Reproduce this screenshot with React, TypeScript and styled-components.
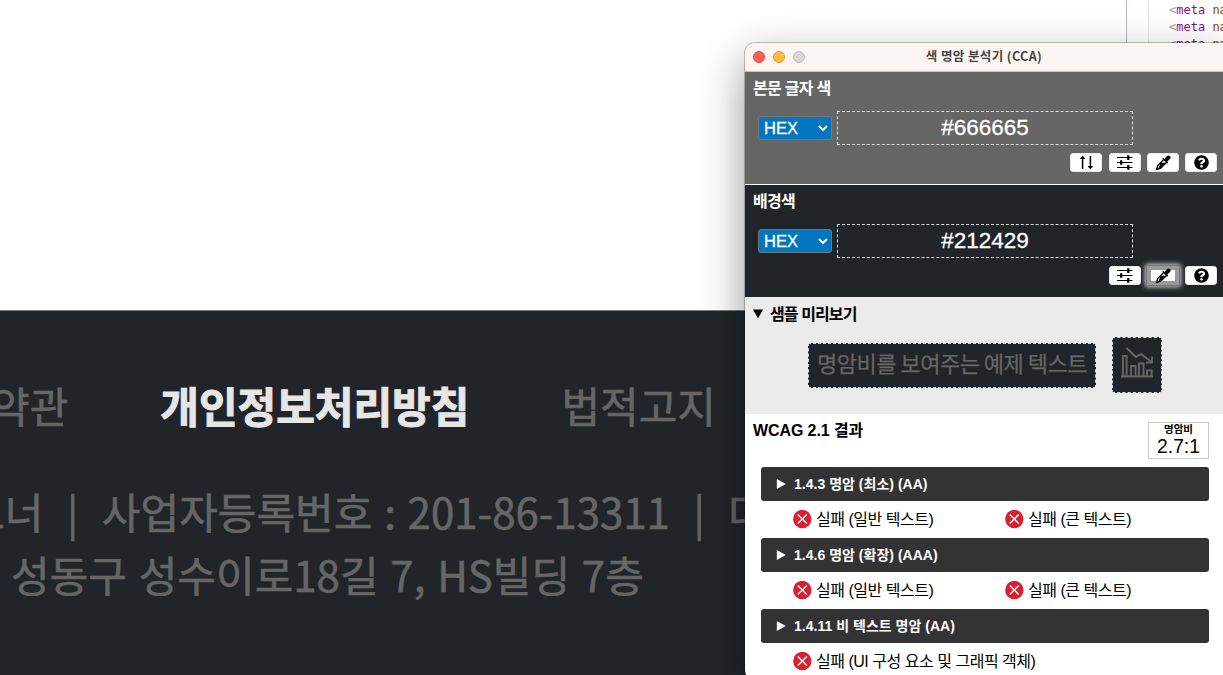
import React from "react";
import styled, { createGlobalStyle } from "styled-components";
import { FaQuestionCircle } from "react-icons/fa";

const GlobalStyle = createGlobalStyle`
  * { box-sizing: border-box; }
  body { margin: 0; overflow: hidden; background: #fff; }
  h2, p { margin: 0; }
`;

const Desktop = styled.main`
  position: relative;
  display: flex;
  flex-direction: column;
  width: 1223px;
  height: 675px;
  overflow: hidden;
  background: #fff;
`;

const TopArea = styled.div`
  display: flex;
  justify-content: flex-end;
  height: 310px;
`;

const DevTools = styled.div`
  display: flex;
  width: 97px;
  border-left: 1px solid #b4b4be;
`;

const Gutter = styled.div`
  flex: none;
  width: 22px;
  border-right: 1px solid #e6e6e6;
`;

const Code = styled.div`
  padding: 2px 0 0 20px;
  font: 12px/17px "DejaVu Sans Mono", monospace;
  color: #a894a6;
  white-space: pre;
`;
const Tag = styled.span`color: #881280;`;
const Attr = styled.span`color: #994500;`;

const Footer = styled.footer`
  height: 365px;
  border-top: 1px solid #7b7f81;
  background: #212529;
  color: #666;
  font: 400 42px/62px "Noto Sans CJK KR", sans-serif;
  -webkit-text-stroke: 0.6px #666;
  word-spacing: 2.4px;
  white-space: pre;
  overflow: hidden;
`;

const FooterNav = styled.nav`
  display: flex;
  gap: 92px;
  margin: 63px 0 0 -9px;
`;

const FooterLink = styled.span<{ $strong?: boolean }>`
  font-weight: ${(p) => (p.$strong ? 700 : 400)};
  color: ${(p) => (p.$strong ? "#e6e6e6" : "#666")};
  -webkit-text-stroke: ${(p) => (p.$strong ? "1px #e6e6e6" : "0.6px #666")};
`;

const FooterLine = styled.p<{ $top: number; $left: number }>`
  margin: ${(p) => p.$top}px 0 0 ${(p) => p.$left}px;
`;

const Window = styled.section`
  position: absolute;
  left: 745px;
  top: 43px;
  width: 480px;
  height: 637px;
  display: flex;
  flex-direction: column;
  border-radius: 10px 0 0 10px;
  background: #fff;
  box-shadow: 0 0 0 1px rgba(0, 0, 0, 0.22), 0 16px 44px rgba(0, 0, 0, 0.42);
  font-family: "Liberation Sans", "Noto Sans CJK KR", sans-serif;
  white-space: nowrap;
`;

const TitleBar = styled.header`
  display: grid;
  grid-template-columns: 1fr auto 1fr;
  align-items: center;
  height: 29px;
  padding: 0 10px 1px 8px;
  border-bottom: 1px solid #c6c2c1;
  border-radius: 10px 0 0 0;
  background: #faf4f2;
`;

const Lights = styled.div`
  display: flex;
  gap: 8px;
`;

const Light = styled.i<{ $fill: string; $edge: string }>`
  width: 12px;
  height: 12px;
  border: 1px solid ${(p) => p.$edge};
  border-radius: 50%;
  background: ${(p) => p.$fill};
`;

const Title = styled.h2`
  margin-top: -2px;
  font: 700 12.5px/20px "Noto Sans CJK KR", sans-serif;
  letter-spacing: 0.4px;
  color: #444;
`;

const ColorSection = styled.section<{ $bg: string; $line?: boolean }>`
  height: ${(p) => (p.$line ? 113 : 112)}px;
  padding: 0 8px;
  border-bottom: ${(p) => (p.$line ? "1px solid #fff" : "0")};
  background: ${(p) => p.$bg};
  color: #fff;
`;

const Heading = styled.h2<{ $ls?: number }>`
  height: 32px;
  font-size: 16px;
  font-weight: 700;
  line-height: 34px;
  letter-spacing: ${(p) => p.$ls ?? -0.7}px;
`;

const ValueRow = styled.div`
  display: flex;
  align-items: center;
  gap: 5px;
  height: 34px;
  margin-top: 7px;
  padding-left: 5px;
  -webkit-text-stroke: 0.3px #fff;
`;

const Format = styled.div`
  display: flex;
  align-items: center;
  justify-content: space-between;
  width: 74px;
  height: 24px;
  padding: 0 3px 0 5px;
  border: 1px solid #767676;
  border-radius: 3px;
  background: #0076c0;
  font-size: 16.5px;
  line-height: 22px;
`;

const HexValue = styled.div`
  width: 296px;
  height: 34px;
  border: 1px dashed #dcdcdc;
  font-size: 22.5px;
  line-height: 31px;
  text-align: center;
`;

const Tools = styled.div`
  display: flex;
  justify-content: flex-end;
  gap: 6.2px;
  margin-top: 8px;
`;

const ToolButton = styled.div<{ $focus?: boolean }>`
  display: flex;
  align-items: center;
  justify-content: center;
  width: 32px;
  height: 19px;
  border: ${(p) => (p.$focus ? "4px solid #999" : "1px solid #e8e8e8")};
  border-radius: ${(p) => (p.$focus ? 1 : 3)}px;
  background: #fff;
  color: #000;
  box-shadow: ${(p) => (p.$focus ? "0 0 0 1px #777, 0 0 5px 2px rgba(255,255,255,.8)" : "none")};
  svg { flex: none; }
`;

const Sample = styled.section`
  height: 117px;
  background: #ebebeb;
  color: #000;
`;

const Summary = styled.div`
  display: flex;
  align-items: center;
  gap: 7px;
  height: 34px;
  padding-left: 8px;
`;

const SampleRow = styled.div`
  display: flex;
  align-items: center;
  justify-content: center;
  gap: 16px;
  height: 56px;
  margin-top: 6px;
`;

const SampleBox = styled.div<{ $w: number; $h: number }>`
  display: flex;
  align-items: center;
  justify-content: center;
  width: ${(p) => p.$w}px;
  height: ${(p) => p.$h}px;
  padding-bottom: 6px;
  border: 1px dashed #e0e0e0;
  background: #212429;
  color: #666665;
  font: 22px/36px "Noto Sans CJK KR", sans-serif;
  letter-spacing: -0.5px;
  -webkit-text-stroke: 0.25px #666665;
`;

const ResultHead = styled.div`
  display: flex;
  justify-content: space-between;
  height: 53px;
  padding: 0 16px 0 8px;
`;

const Ratio = styled.div`
  display: flex;
  flex-direction: column;
  align-items: center;
  width: 61px;
  height: 37px;
  margin-top: 8px;
  border: 1px solid #c8c8c8;
`;

const RatioLabel = styled.b`
  height: 13px;
  font-size: 10.5px;
  line-height: 13px;
`;

const RatioValue = styled.span`
  font-size: 19.3px;
  line-height: 22px;
`;

const Criterion = styled.div`
  display: flex;
  align-items: center;
  gap: 8px;
  height: 34px;
  margin: 0 16px;
  padding-left: 15px;
  border-radius: 3px;
  background: #333;
  color: #fff;
`;

const CriterionName = styled.b`
  height: 34px;
  font-size: 14px;
  line-height: 34px;
  letter-spacing: 0.02px;
`;

const Outcomes = styled.div<{ $single: boolean }>`
  display: grid;
  grid-template-columns: ${(p) => (p.$single ? "1fr" : "212px 1fr")};
  height: 37px;
  padding-left: 48px;
  color: #000;
`;

const Outcome = styled.div`
  display: flex;
  align-items: center;
  gap: 4px;
  height: 36px;
  font-size: 16px;
  line-height: 38px;
  letter-spacing: -0.48px;
  svg { flex: none; }
`;

const OutcomeText = styled.span`
  height: 36px;
`;

const Chevron = () => (
  <svg width="10" height="7" viewBox="0 0 10 7" fill="none" stroke="#fff" strokeWidth="2">
    <path d="M1 1l4 4 4-4" />
  </svg>
);

const SwapIcon = () => (
  <svg width="15" height="15" viewBox="0 0 15 15" fill="none" stroke="#000" strokeWidth="1.5">
    <path d="M3.6 14V3M11.4 1v11" />
    <path d="M3.6 .4L6.4 4H.8zM11.4 14.6l2.8-3.6H8.6z" fill="#000" stroke="none" />
  </svg>
);

const SlidersIcon = () => (
  <svg width="17" height="15" viewBox="0 0 17 15" fill="none" stroke="#000">
    <path d="M1 2.5h15.5M1 7.5h15.5M1 12.5h15.5" strokeWidth="1.1" />
    <path d="M12.3.3v4.6M5.2 5.2v4.6M12.3 10.1v4.6" strokeWidth="2.2" />
  </svg>
);

const DropperIcon = () => (
  <svg width="16" height="16" viewBox="0 0 16 16">
    <path d="M8.3 4.9L2.7 10.5l-1 3.8 3.8-1 5.6-5.6" fill="#fff" stroke="#000" strokeWidth="1.4" />
    <path d="M5.6 7.8h5L5.2 13l-1.6.3z" fill="#000" />
    <path d="M.6 15.5l1-2.3 1.3 1.3z" fill="#000" />
    <path d="M7.2 3.8l1-1 1.3 1.1L12 1.1C13 .2 14.2.3 15 1.1s.9 2 0 2.9l-2.8 2.6 1 1.2-1 1z" fill="#000" />
  </svg>
);

const ChartIcon = () => (
  <svg width="34" height="32" viewBox="0 0 34 32" fill="none" stroke="#666665" strokeWidth="1.9">
    <path d="M1 30.5h32M3 30V10h3.6v20M11 30V20h4.6v10M19 30V17.5h4.6V30M27 30v-5.6h4.6V30" />
    <path d="M6.5 2l9.5 9 5-3L31.5 16M32 10.5V16.5h-6" />
  </svg>
);

const FailIcon = () => (
  <svg width="19" height="19" viewBox="0 0 19 19">
    <circle cx="9.3" cy="9" r="9.2" fill="#dc1f2e" />
    <path d="M4.8 4.5l9 9M13.8 4.5l-9 9" stroke="#fff" strokeWidth="1.4" />
  </svg>
);

const Arrow = ({ open }: { open?: boolean }) => (
  <svg width="10" height="10" viewBox="0 0 10 10" fill="currentColor">
    <path d={open ? "M0 .5h10L5 9.5z" : "M.8 0v10L9.8 5z"} />
  </svg>
);

function ColorPicker({ label, value, bg, swap, focus }: {
  label: string; value: string; bg: string; swap?: boolean; focus?: boolean;
}) {
  return (
    <ColorSection $bg={bg} $line={swap}>
      <Heading>{label}</Heading>
      <ValueRow>
        <Format>HEX<Chevron /></Format>
        <HexValue>{value}</HexValue>
      </ValueRow>
      <Tools>
        {swap && <ToolButton><SwapIcon /></ToolButton>}
        <ToolButton><SlidersIcon /></ToolButton>
        <ToolButton $focus={focus}><DropperIcon /></ToolButton>
        <ToolButton><FaQuestionCircle size={15} /></ToolButton>
      </Tools>
    </ColorSection>
  );
}

const criteria = [
  { name: "1.4.3 명암 (최소) (AA)", results: ["실패 (일반 텍스트)", "실패 (큰 텍스트)"] },
  { name: "1.4.6 명암 (확장) (AAA)", results: ["실패 (일반 텍스트)", "실패 (큰 텍스트)"] },
  { name: "1.4.11 비 텍스트 명암 (AA)", results: ["실패 (UI 구성 요소 및 그래픽 객체)"] },
];

export default function App() {
  return (
    <Desktop>
      <GlobalStyle />
      <TopArea>
        <DevTools>
          <Gutter />
          <Code>
            {[0, 1, 2].map((n) => (
              <div key={n}>&lt;<Tag>meta</Tag> <Attr>na</Attr></div>
            ))}
          </Code>
        </DevTools>
      </TopArea>
      <Footer>
        <FooterNav>
          <FooterLink>약관</FooterLink>
          <FooterLink $strong>개인정보처리방침</FooterLink>
          <FooterLink>법적고지</FooterLink>
        </FooterNav>
        <FooterLine $top={44} $left={-34}>트너  |  사업자등록번호 : 201-86-13311  |  대</FooterLine>
        <FooterLine $top={1} $left={11}>성동구 성수이로18길 7, HS빌딩 7층</FooterLine>
      </Footer>
      <Window>
        <TitleBar>
          <Lights>
            <Light $fill="#ff5d5b" $edge="#e2463f" />
            <Light $fill="#ffbb40" $edge="#e0a030" />
            <Light $fill="#dbd6d4" $edge="#c4bfbd" />
          </Lights>
          <Title>색 명암 분석기 (CCA)</Title>
        </TitleBar>
        <ColorPicker label="본문 글자 색" value="#666665" bg="#666665" swap />
        <ColorPicker label="배경색" value="#212429" bg="#212429" focus />
        <Sample>
          <Summary><Arrow open /><Heading $ls={-0.9}>샘플 미리보기</Heading></Summary>
          <SampleRow>
            <SampleBox $w={288} $h={45}>명암비를 보여주는 예제 텍스트</SampleBox>
            <SampleBox $w={50} $h={56}><ChartIcon /></SampleBox>
          </SampleRow>
        </Sample>
        <ResultHead>
          <Heading $ls={-0.1}>WCAG 2.1 결과</Heading>
          <Ratio>
            <RatioLabel>명암비</RatioLabel>
            <RatioValue>2.7:1</RatioValue>
          </Ratio>
        </ResultHead>
        {criteria.map((c) => (
          <React.Fragment key={c.name}>
            <Criterion><Arrow /><CriterionName>{c.name}</CriterionName></Criterion>
            <Outcomes $single={c.results.length === 1}>
              {c.results.map((r) => (
                <Outcome key={r}><FailIcon /><OutcomeText>{r}</OutcomeText></Outcome>
              ))}
            </Outcomes>
          </React.Fragment>
        ))}
      </Window>
    </Desktop>
  );
}
